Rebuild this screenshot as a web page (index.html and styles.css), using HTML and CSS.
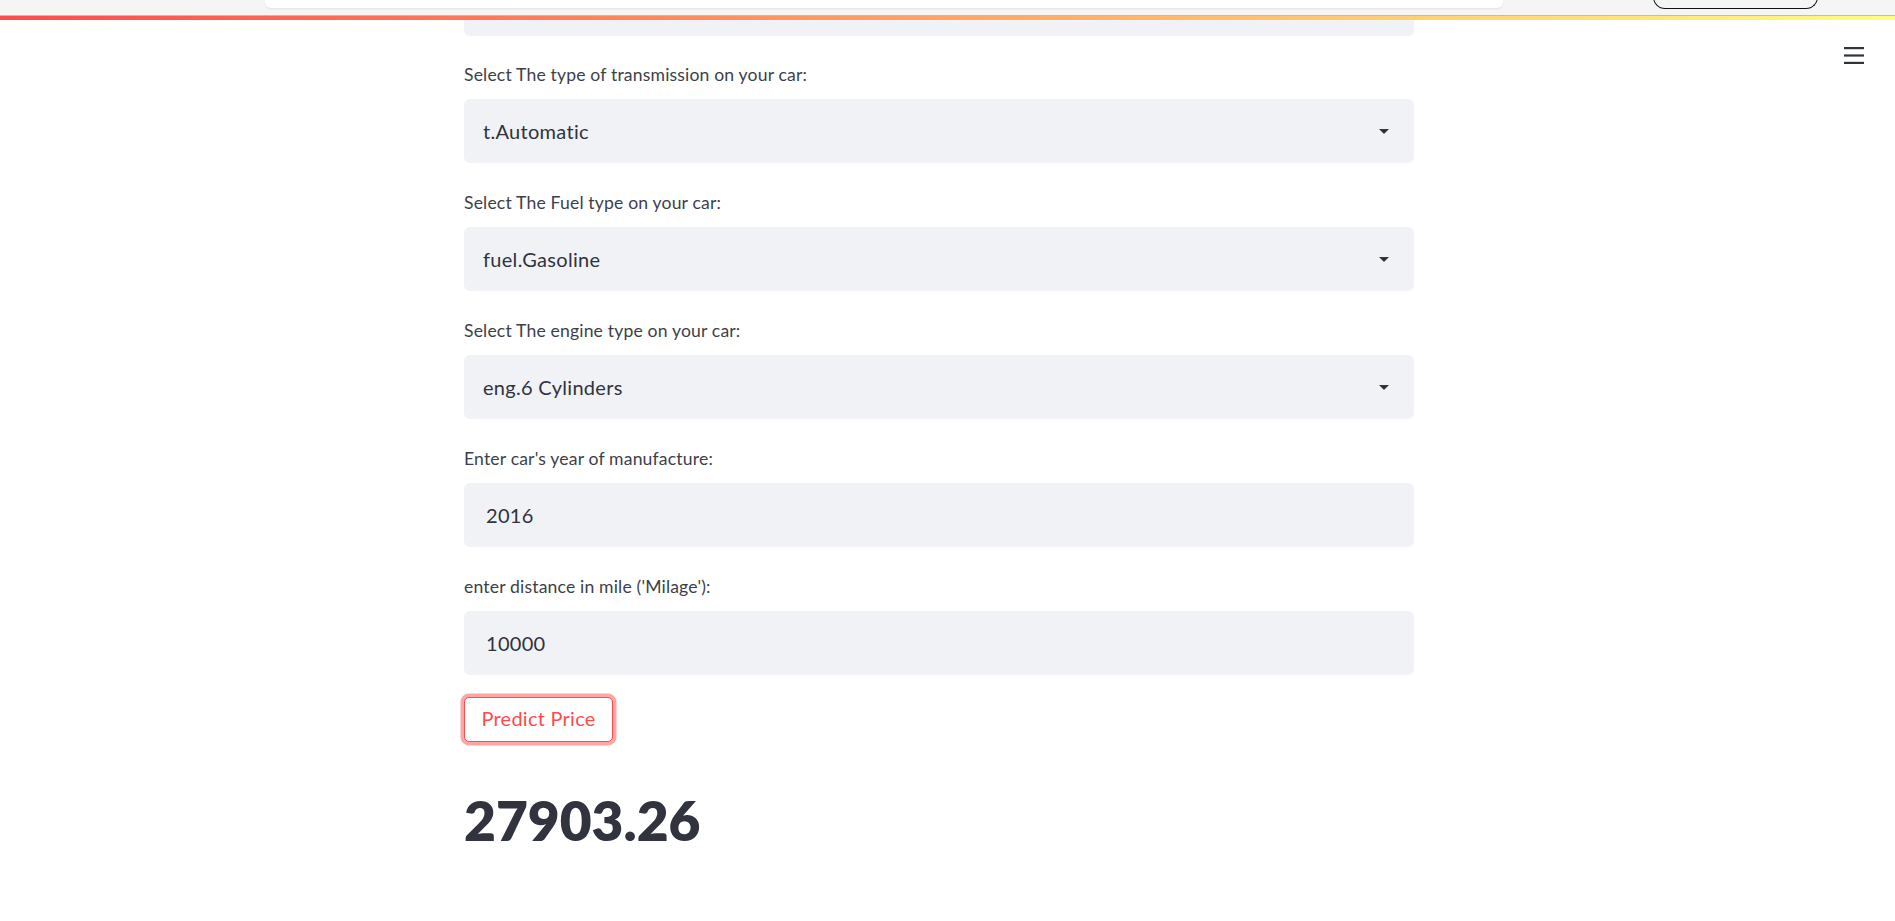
FILE: index.html
```html
<!DOCTYPE html>
<html>
<head>
<meta charset="utf-8">
<link rel="stylesheet" href="styles.css">
</head>
<body>
<div class="chrome">
  <div class="chrome-tab"></div>
  <div class="chrome-pill"><span class="pill-dot"></span></div>
</div>
<div class="chrome-line"></div>
<div class="deco"></div>
<button class="menu" aria-label="menu">
  <svg width="20" height="17" viewBox="0 0 20 17"><rect x="0" y="0" width="20" height="2.2" fill="#31333f"/><rect x="0" y="7.4" width="20" height="2.2" fill="#31333f"/><rect x="0" y="14.8" width="20" height="2.2" fill="#31333f"/></svg>
</button>
<main class="main">
  <div class="block">
    <div class="field field-partial"></div>

    <div class="widget">
      <label class="label">Select The type of transmission on your car:</label>
      <div class="field select"><span>t.Automatic</span><span class="caret"></span></div>
    </div>

    <div class="widget">
      <label class="label">Select The Fuel type on your car:</label>
      <div class="field select"><span>fuel.Gasoline</span><span class="caret"></span></div>
    </div>

    <div class="widget">
      <label class="label">Select The engine type on your car:</label>
      <div class="field select"><span>eng.6 Cylinders</span><span class="caret"></span></div>
    </div>

    <div class="widget">
      <label class="label">Enter car's year of manufacture:</label>
      <div class="field text-input"><span>2016</span></div>
    </div>

    <div class="widget">
      <label class="label">enter distance in mile ('Milage'):</label>
      <div class="field text-input"><span>10000</span></div>
    </div>

    <div class="btn-wrap"><button class="btn">Predict Price</button></div>

    <h1 class="result">27903.26</h1>
  </div>
</main>
</body>
</html>
```
FILE: styles.css
```css
html, body {
  margin: 0;
  padding: 0;
  background: #ffffff;
}
body {
  font-family: "Lato", "Noto Sans", sans-serif;
  color: #31333f;
  width: 1895px;
  height: 921px;
  overflow: hidden;
  position: relative;
}
.chrome {
  height: 15px;
  background: #f5f5f5;
  display: flex;
  align-items: flex-start;
}
.chrome-tab {
  margin-left: 265px;
  width: 1238px;
  height: 8px;
  background: #ffffff;
  border-radius: 0 0 6px 6px;
  box-shadow: 0 1px 2px rgba(0,0,0,0.08);
}
.chrome-pill {
  margin-left: 150px;
  width: 163px;
  height: 18px;
  margin-top: -10px;
  border: 1.5px solid #111;
  border-radius: 0 0 12px 12px / 0 0 12px 12px;
  border-top: none;
  position: relative;
  background: #f5f5f5;
}
.pill-dot {
  position: absolute;
  right: 8px;
  top: -4px;
  width: 22px;
  height: 14px;
  border-radius: 50%;
  background: #8e8e8e;
}
.chrome-line {
  height: 1px;
  background: #bdbdbd;
}
.deco {
  height: 4px;
  background: linear-gradient(90deg, #ff4b4b 0%, #fffd80 100%);
}
.menu {
  position: absolute;
  top: 47px;
  left: 1844px;
  padding: 0;
  border: none;
  background: transparent;
  line-height: 0;
}
.main {
  display: flex;
}
.block {
  margin-left: 464px;
  width: 950px;
  display: flex;
  flex-direction: column;
}
.field {
  background: #f0f2f6;
  border-radius: 6px;
  height: 64px;
  box-sizing: border-box;
  display: flex;
  align-items: center;
  padding: 0 22px 0 19px;
  font-size: 20px;
  letter-spacing: 0.3px;
  color: #31333f;
}
.text-input {
  padding-left: 22px;
}
.field-partial {
  height: 16px;
  border-radius: 0 0 6px 6px;
  margin-bottom: 31px;
}
.widget {
  display: flex;
  flex-direction: column;
  margin-bottom: 32px;
}
.label {
  font-size: 17.6px;
  letter-spacing: 0.16px;
  line-height: 16px;
  height: 16px;
  margin-bottom: 16px;
  color: #3d3f4a;
}
.select {
  justify-content: space-between;
}
.caret {
  width: 0;
  height: 0;
  border-left: 5px solid transparent;
  border-right: 5px solid transparent;
  border-top: 5px solid #31333f;
  margin-right: 3px;
}
.btn-wrap {
  margin-top: -10px;
}
.btn {
  font-family: inherit;
  font-size: 20px;
  letter-spacing: 0.25px;
  color: #ff4b4b;
  background: #ffffff;
  border: 1px solid #ff4b4b;
  border-radius: 5px;
  width: 149px;
  height: 45px;
  padding: 0 0 3px 0;
  box-shadow: 0 0 0 3.5px rgba(255, 75, 75, 0.5);
  margin: 0;
}
.result {
  margin: 45px 0 0 0;
  font-size: 55px;
  font-weight: 800;
  line-height: 1.2;
  color: #31333f;
}
```
